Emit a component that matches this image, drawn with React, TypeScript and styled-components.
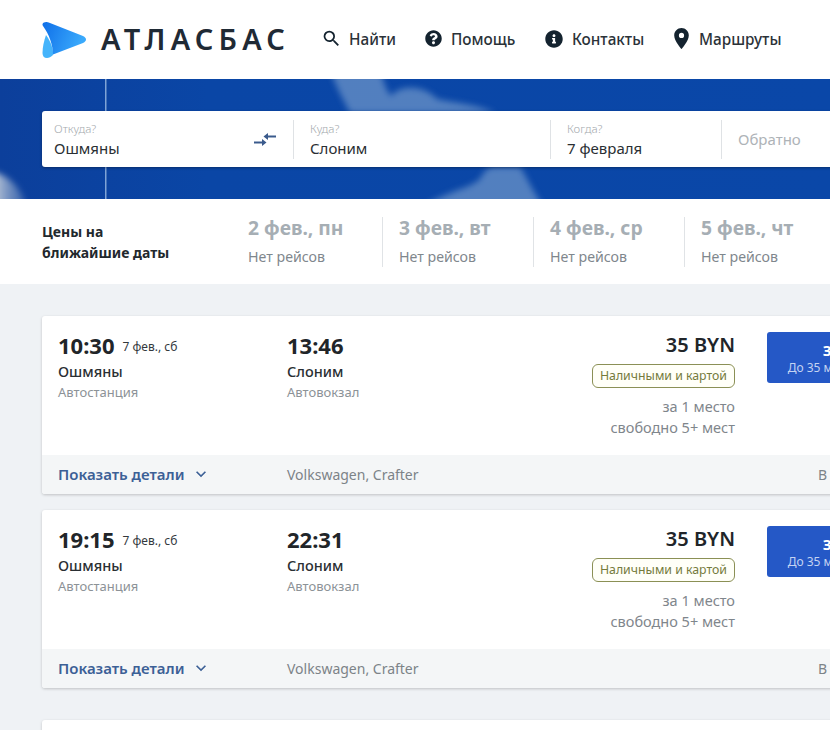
import React from "react";
import styled, { createGlobalStyle } from "styled-components";
import { MdSearch, MdLocationOn, MdKeyboardArrowDown } from "react-icons/md";
import { FaQuestionCircle, FaInfoCircle } from "react-icons/fa";

const GlobalStyle = createGlobalStyle`
  html, body {
    margin: 0;
    padding: 0;
    background: #eff2f5;
    font-family: "Noto Sans", "Open Sans", sans-serif;
    color: #212529;
    overflow: hidden;
  }
`;

const Page = styled.div`
  width: 830px;
  height: 730px;
  overflow: hidden;
`;

const Header = styled.header`
  height: 79px;
  box-sizing: border-box;
  padding: 0 0 2px 42px;
  background: #fff;
  display: flex;
  align-items: center;
`;

const LogoWrap = styled.div`
  display: flex;
  align-items: center;
  width: 276px;
  gap: 14px;
`;

const LogoMark = styled.svg`
  position: relative;
  top: 1px;
`;

const LogoText = styled.span`
  font-size: 29px;
  font-weight: 600;
  letter-spacing: 5.2px;
  color: #1f2a35;
  line-height: 1;
  white-space: nowrap;
`;

const Nav = styled.nav`
  display: flex;
  align-items: center;
`;

const NavItem = styled.a<{ $w: number }>`
  display: flex;
  align-items: center;
  width: ${(p) => p.$w}px;
  font-size: 15.3px;
  font-weight: 500;
  color: #2b3238;
  white-space: nowrap;
`;

const NavIcon = styled.span`
  display: flex;
  width: 26px;
  justify-content: center;
  align-items: center;
  color: #14232f;
  margin-right: 5px;
`;

const Hero = styled.section`
  position: relative;
  height: 120px;
  background: linear-gradient(90deg, #0c3f9b 0, #0a46a6 25%, #0a47a8 100%);
  overflow: hidden;
  display: flex;
  align-items: center;
  padding-left: 42px;
`;

const HeroArt = styled.svg`
  position: absolute;
  left: 0;
  top: 0;
`;

const SearchForm = styled.div`
  position: relative;
  display: flex;
  align-items: center;
  height: 56px;
  width: 900px;
  flex-shrink: 0;
  background: #fff;
  border-radius: 3px;
  box-shadow: 0 1px 3px rgba(0, 0, 0, 0.35);
`;

const Field = styled.div<{ $w: number; $first?: boolean }>`
  position: relative;
  width: ${(p) => p.$w}px;
  height: 39px;
  box-sizing: border-box;
  padding-left: ${(p) => (p.$first ? 12 : 16)}px;
  border-left: ${(p) => (p.$first ? "none" : "1px solid #dfe2e5")};
  flex-shrink: 0;
`;

const FieldLabel = styled.div`
  font-size: 11.5px;
  line-height: 14px;
  color: #a4a9ad;
  font-weight: 300;
  margin-top: 2px;
`;

const FieldValue = styled.div`
  font-size: 15px;
  line-height: 20px;
  margin-top: 2px;
  color: #2a2f33;
`;

const ReturnValue = styled.div`
  font-size: 15px;
  line-height: 39px;
  color: #aeb3b7;
`;

const SwapIcon = styled.svg`
  position: absolute;
  right: 17px;
  top: 13px;
`;

const DateStrip = styled.section`
  height: 85px;
  background: #fff;
  display: flex;
  align-items: center;
  padding-left: 42px;
`;

const StripTitle = styled.div`
  width: 189px;
  flex-shrink: 0;
  font-size: 14px;
  font-weight: 700;
  line-height: 21px;
  color: #22282d;
`;

const DateItem = styled.div<{ $first?: boolean }>`
  width: 151px;
  height: 50px;
  flex-shrink: 0;
  box-sizing: border-box;
  padding-left: 16px;
  border-left: 1px solid ${(p) => (p.$first ? "transparent" : "#e0e3e6")};
`;

const DateName = styled.div`
  font-size: 19.3px;
  line-height: 24px;
  margin-top: -1px;
  font-weight: 700;
  color: #a6aeb4;
  white-space: nowrap;
`;

const DateNote = styled.div`
  font-size: 14.2px;
  line-height: 20px;
  margin-top: 7px;
  color: #7f878d;
  white-space: nowrap;
`;

const List = styled.main`
  padding: 32px 0 0 42px;
  display: flex;
  flex-direction: column;
  align-items: flex-start;
`;

const Card = styled.article<{ $gap: number }>`
  width: 960px;
  height: 178px;
  flex-shrink: 0;
  margin-bottom: ${(p) => p.$gap}px;
  background: #fff;
  border-radius: 3px;
  box-shadow: 0 1px 3px rgba(0, 0, 0, 0.2);
  display: flex;
  flex-direction: column;
  overflow: hidden;
`;

const CardBody = styled.div`
  flex: 1;
  display: flex;
  padding: 15px 0 0 16px;
`;

const Stop = styled.div`
  width: 229px;
  flex-shrink: 0;
`;

const TimeRow = styled.div`
  display: flex;
  align-items: baseline;
  gap: 8px;
`;

const Time = styled.span`
  font-size: 22px;
  line-height: 28px;
  font-weight: 700;
  color: #212529;
`;

const TripDate = styled.span`
  position: relative;
  top: -3px;
  font-size: 12px;
  color: #33393e;
`;

const City = styled.div`
  font-size: 14.5px;
  line-height: 20px;
  margin-top: 2px;
  font-weight: 500;
  color: #2a2f33;
`;

const Station = styled.div`
  font-size: 13px;
  line-height: 20px;
  margin-top: 1px;
  color: #8c9297;
`;

const PriceCol = styled.div`
  width: 219px;
  flex-shrink: 0;
  margin-top: 1px;
  display: flex;
  flex-direction: column;
  align-items: flex-end;
`;

const Price = styled.div`
  font-size: 20px;
  line-height: 26px;
  font-weight: 600;
  color: #212529;
`;

const PayBadge = styled.div`
  margin-top: 6px;
  height: 24px;
  box-sizing: border-box;
  padding: 0 7px;
  border: 1px solid #8b9055;
  border-radius: 6px;
  background: #fffff8;
  font-size: 12.3px;
  line-height: 22px;
  color: #757b3c;
  white-space: nowrap;
`;

const PriceNote = styled.div`
  margin-top: 8px;
  font-size: 14.5px;
  line-height: 21px;
  text-align: right;
  color: #7f868c;
  white-space: nowrap;
`;

const BuyButton = styled.button`
  margin: 1px 0 0 32px;
  width: 180px;
  height: 51px;
  flex-shrink: 0;
  border: none;
  border-radius: 3px;
  background: #2558c6;
  color: #fff;
  font-family: inherit;
  padding: 0;
  text-align: center;
`;

const BuyTitle = styled.div`
  font-size: 15px;
  line-height: 20px;
  font-weight: 700;
`;

const BuySub = styled.div`
  font-size: 12px;
  line-height: 16px;
  color: #c4d3f2;
  white-space: nowrap;
`;

const CardFooter = styled.div`
  height: 39px;
  flex-shrink: 0;
  background: #f4f6f7;
  display: flex;
  align-items: center;
  padding-left: 16px;
`;

const DetailsLink = styled.a`
  width: 229px;
  flex-shrink: 0;
  display: flex;
  align-items: center;
  gap: 7px;
  padding-bottom: 2px;
  font-size: 15px;
  font-weight: 600;
  color: #3c6096;
  white-space: nowrap;
`;

const BusName = styled.div`
  width: 531px;
  flex-shrink: 0;
  font-size: 14px;
  color: #7c8388;
`;

const FooterNote = styled.div`
  font-size: 14px;
  color: #7c8388;
  white-space: nowrap;
`;

function Logo() {
  return (
    <LogoMark width="45" height="38" viewBox="0 0 45 38">
      <defs>
        <linearGradient id="logoMain" x1="0" y1="0" x2="1" y2="0.3">
          <stop offset="0" stopColor="#0f6fe8" />
          <stop offset="1" stopColor="#3aaafc" />
        </linearGradient>
      </defs>
      <path
        d="M4 14C9 21 11.500 28 11 34C9 36 7 37 5 37C2 37 0.500 35 0.500 32C0.500 26 2 20 4 14Z"
        fill="#45b4fb"
      />
      <path
        d="M2 1.500C4 0.500 5 1 8 2L41 15C45 17 45 20 41 22L11 33.500C11 24 7 13 1 5C0 3.500 0.500 2 2 1.500Z"
        fill="url(#logoMain)"
      />
    </LogoMark>
  );
}

const trips = [
  { dep: "10:30", arr: "13:46", gap: 16 },
  { dep: "19:15", arr: "22:31", gap: 32 },
];

const days = ["2 фев., пн", "3 фев., вт", "4 фев., ср", "5 фев., чт"];

export default function App() {
  return (
    <Page>
      <GlobalStyle />
      <Header>
        <LogoWrap>
          <Logo />
          <LogoText>АТЛАСБАС</LogoText>
        </LogoWrap>
        <Nav>
          <NavItem $w={102}>
            <NavIcon>
              <MdSearch size={21} />
            </NavIcon>
            Найти
          </NavItem>
          <NavItem $w={121}>
            <NavIcon>
              <FaQuestionCircle size={17} />
            </NavIcon>
            Помощь
          </NavItem>
          <NavItem $w={127}>
            <NavIcon>
              <FaInfoCircle size={18} />
            </NavIcon>
            Контакты
          </NavItem>
          <NavItem $w={120}>
            <NavIcon>
              <MdLocationOn size={25} />
            </NavIcon>
            Маршруты
          </NavItem>
        </Nav>
      </Header>

      <Hero>
        <HeroArt width="830" height="120" viewBox="0 0 830 120">
          <defs>
            <filter id="soft" x="-30%" y="-30%" width="160%" height="160%">
              <feGaussianBlur stdDeviation="3" />
            </filter>
            <linearGradient id="cornerFade" x1="0" y1="0" x2="1" y2="0">
              <stop offset="0" stopColor="#d2d8e0" />
              <stop offset="1" stopColor="#6f8fbf" stopOpacity="0.4" />
            </linearGradient>
          </defs>
          <rect x="105" y="0" width="1.500" height="120" fill="#7fa3d6" />
          <path
            d="M-10 92C10 96 22 110 27 130H-10Z"
            fill="url(#cornerFade)"
            filter="url(#soft)"
          />
          <path
            d="M330 -10H380C384 6 388 14 391 17C398 7 422 4 437 20C455 24 480 26 495 34H350C344 22 336 8 330 -10Z"
            fill="#6a93c8"
            opacity="0.75"
            filter="url(#soft)"
          />
          <path
            d="M420 130C445 112 470 110 480 100C484 92 488 88 495 88H520C526 96 530 108 545 130Z"
            fill="#6a93c8"
            opacity="0.75"
            filter="url(#soft)"
          />
        </HeroArt>
        <SearchForm>
          <Field $w={251} $first>
            <FieldLabel>Откуда?</FieldLabel>
            <FieldValue>Ошмяны</FieldValue>
            <SwapIcon width="22" height="14" viewBox="0 0 22 14" fill="none">
              <path d="M22 3.500H12" stroke="#3a5a8c" strokeWidth="2" />
              <path d="M14 0L9.500 3.500L14 7Z" fill="#3a5a8c" />
              <path d="M0 9.500H10" stroke="#3a5a8c" strokeWidth="2" />
              <path d="M8 6L12.500 9.500L8 13Z" fill="#3a5a8c" />
            </SwapIcon>
          </Field>
          <Field $w={257}>
            <FieldLabel>Куда?</FieldLabel>
            <FieldValue>Слоним</FieldValue>
          </Field>
          <Field $w={171}>
            <FieldLabel>Когда?</FieldLabel>
            <FieldValue>7 февраля</FieldValue>
          </Field>
          <Field $w={150}>
            <ReturnValue>Обратно</ReturnValue>
          </Field>
        </SearchForm>
      </Hero>

      <DateStrip>
        <StripTitle>
          Цены на
          <br />
          ближайшие даты
        </StripTitle>
        {days.map((day, i) => (
          <DateItem key={day} $first={i === 0}>
            <DateName>{day}</DateName>
            <DateNote>Нет рейсов</DateNote>
          </DateItem>
        ))}
      </DateStrip>

      <List>
        {trips.map((trip) => (
          <Card key={trip.dep} $gap={trip.gap}>
            <CardBody>
              <Stop>
                <TimeRow>
                  <Time>{trip.dep}</Time>
                  <TripDate>7 фев., сб</TripDate>
                </TimeRow>
                <City>Ошмяны</City>
                <Station>Автостанция</Station>
              </Stop>
              <Stop>
                <TimeRow>
                  <Time>{trip.arr}</Time>
                </TimeRow>
                <City>Слоним</City>
                <Station>Автовокзал</Station>
              </Stop>
              <PriceCol>
                <Price>35 BYN</Price>
                <PayBadge>Наличными и картой</PayBadge>
                <PriceNote>
                  за 1 место
                  <br />
                  свободно 5+ мест
                </PriceNote>
              </PriceCol>
              <BuyButton>
                <BuyTitle>Заказать</BuyTitle>
                <BuySub>До 35 минут до отъезда</BuySub>
              </BuyButton>
            </CardBody>
            <CardFooter>
              <DetailsLink>
                Показать детали
                <MdKeyboardArrowDown size={20} />
              </DetailsLink>
              <BusName>Volkswagen, Crafter</BusName>
              <FooterNote>В пути 3 ч 16 мин</FooterNote>
            </CardFooter>
          </Card>
        ))}
        <Card $gap={0} />
      </List>
    </Page>
  );
}
